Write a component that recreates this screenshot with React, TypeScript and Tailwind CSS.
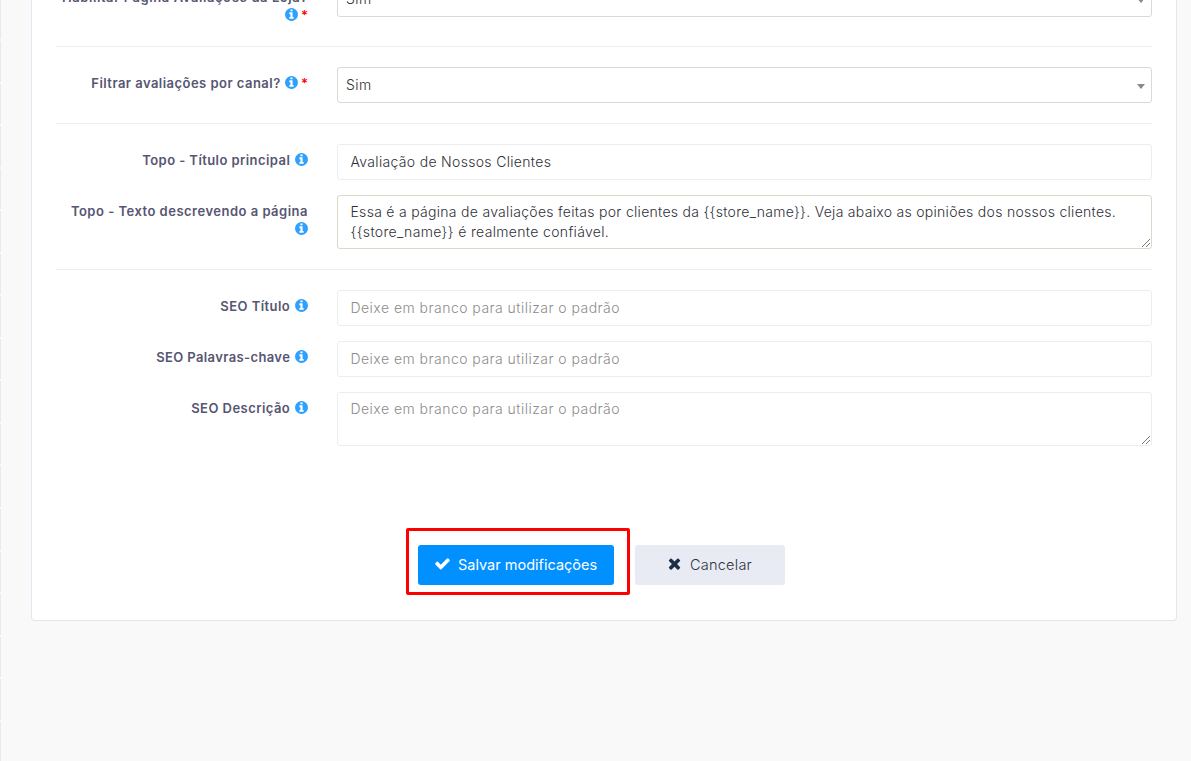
import type { ReactNode } from 'react';
import { clsx } from 'clsx';

const ICON_PATHS = {
  info: 'M1152 1376v-160q0-14-9-23t-23-9h-96v-512q0-14-9-23t-23-9h-320q-14 0-23 9t-9 23v160q0 14 9 23t23 9h96v320h-96q-14 0-23 9t-9 23v160q0 14 9 23t23 9h448q14 0 23-9t9-23zm-128-896v-160q0-14-9-23t-23-9h-192q-14 0-23 9t-9 23v160q0 14 9 23t23 9h192q14 0 23-9t9-23zm640 416q0 209-103 385.5t-279.5 279.5-385.5 103-385.5-103-279.5-279.5-103-385.5 103-385.5 279.5-279.5 385.5-103 385.5 103 279.5 279.5 103 385.5z',
  check:
    'M1671 566q0 40-28 68l-724 724-136 136q-28 28-68 28t-68-28l-136-136-362-362q-28-28-28-68t28-68l136-136q28-28 68-28t68 28l294 295 656-657q28-28 68-28t68 28l136 136q28 28 28 68z',
  times:
    'M1490 1322q0 40-28 68l-136 136q-28 28-68 28t-68-28l-294-294-294 294q-28 28-68 28t-68-28l-136-136q-28-28-28-68t28-68l294-294-294-294q-28-28-28-68t28-68l136-136q28-28 68-28t68 28l294 294 294-294q28-28 68-28t68 28l136 136q28 28 28 68t-28 68l-294 294 294 294q28 28 28 68z',
};

const SEO_PLACEHOLDER = 'Deixe em branco para utilizar o padrão';

function Icon({ name, className }: { name: keyof typeof ICON_PATHS; className?: string }) {
  return (
    <svg viewBox="0 0 1792 1792" fill="currentColor" className={className} aria-hidden="true">
      <path d={ICON_PATHS[name]} />
    </svg>
  );
}

interface FieldRowProps {
  label: string;
  labelClassName?: string;
  required?: boolean;
  children: ReactNode;
}

function FieldRow({ label, labelClassName = 'tracking-[0.45px]', required, children }: FieldRowProps) {
  return (
    <div className="flex">
      <label className="mr-[29px] w-[252px] shrink-0 pt-[7px] text-right text-[13px] leading-[18px] font-semibold text-[#575672]">
        <span className={clsx('whitespace-nowrap', labelClassName)}>{label}</span>{' '}
        <span className="inline-flex items-start pt-px align-top leading-[17px]">
          <Icon name="info" className={clsx('size-[15px] text-[#2ea1ff]', !required && '-mr-[0.5px]')} />
          {required && <span className="ml-0.5 text-[#ff0000]">*</span>}
        </span>
      </label>
      <div className="w-[815px]">{children}</div>
    </div>
  );
}

function SelectBox({ value }: { value: string }) {
  return (
    <div className="flex h-9 items-center justify-between rounded-[3px] border border-[#d9d9dc] pr-1.5 pl-2 text-sm font-light text-[#333]">
      <span className="tracking-[0.4px]">{value}</span>
      <span className="mt-0.5 border-x-4 border-t-5 border-x-transparent border-t-[#888]" />
    </div>
  );
}

function TextInput({ value, placeholder, className }: { value?: string; placeholder?: string; className?: string }) {
  return (
    <input
      defaultValue={value}
      placeholder={placeholder}
      className={clsx(
        'block h-9 w-full rounded-[3px] border border-[#ebedf2] px-[12.5px] pb-0.5 text-sm font-light text-[#2f3037] placeholder:text-[#8c8c8c]',
        className
      )}
    />
  );
}

function TextArea({ children, className }: { children: ReactNode; className?: string }) {
  return (
    <div
      className={clsx(
        'relative h-[54px] rounded-[3px] border px-[12.5px] pt-[6px] text-sm leading-5 font-light whitespace-nowrap',
        className
      )}
    >
      {children}
      {/* resize grip */}
      <svg viewBox="0 0 8 8" className="absolute right-px bottom-px size-2" stroke="#555" strokeWidth="0.8">
        <path d="M0 8L8 0M4 8L8 4" />
      </svg>
    </div>
  );
}

function Divider() {
  return <hr className="my-5 border-t border-[#ebedef]" />;
}

function SidebarEdge() {
  return (
    <div className="-mt-[1.6px] flex w-px shrink-0 flex-col gap-0.5">
      {Array.from({ length: 18 }, (_, i) => (
        <div key={i} className="h-[40.56px] shrink-0 bg-[#e8e8f0]" />
      ))}
    </div>
  );
}

export default function App() {
  return (
    <div className="flex h-[761px] overflow-hidden bg-[#f9f9f9] font-['Inter','Noto_Sans',sans-serif]">
      <SidebarEdge />
      <main className="ml-[30px] h-[621px] w-[1146px] shrink-0 rounded-b border border-t-0 border-[#e4e5ee] bg-white px-6">
        <div className="-mt-[19px]">
          <FieldRow label="Habilitar Página Avaliações da Loja?" labelClassName="tracking-[0.57px]" required>
            <SelectBox value="Sim" />
          </FieldRow>
          <hr className="mt-[22px] mb-5 border-t border-[#ebedef]" />
          <FieldRow label="Filtrar avaliações por canal?" labelClassName="tracking-[0.47px]" required>
            <SelectBox value="Sim" />
          </FieldRow>
          <Divider />
          <div className="flex flex-col gap-[15px]">
            <FieldRow label="Topo - Título principal" labelClassName="tracking-[0.43px]">
              <TextInput value="Avaliação de Nossos Clientes" className="tracking-[0.32px]" />
            </FieldRow>
            <FieldRow label="Topo - Texto descrevendo a página" labelClassName="tracking-[0.49px]">
              <TextArea className="border-[#d9d9cc] text-[#2f3037]">
                <p className="tracking-[0.29px]">
                  {'Essa é a página de avaliações feitas por clientes da {{store_name}}. Veja abaixo as opiniões dos nossos clientes.'}
                </p>
                <p className="tracking-[0.34px]">{'{{store_name}} é realmente confiável.'}</p>
              </TextArea>
            </FieldRow>
          </div>
          <Divider />
          <div className="flex flex-col gap-[15px]">
            <FieldRow label="SEO Título">
              <TextInput placeholder={SEO_PLACEHOLDER} className="tracking-[0.47px]" />
            </FieldRow>
            <FieldRow label="SEO Palavras-chave" labelClassName="tracking-[0.38px]">
              <TextInput placeholder={SEO_PLACEHOLDER} className="tracking-[0.47px]" />
            </FieldRow>
            <FieldRow label="SEO Descrição">
              <TextArea className="border-[#ebedf2] tracking-[0.47px] text-[#8c8c8c]">{SEO_PLACEHOLDER}</TextArea>
            </FieldRow>
          </div>
        </div>

        <div className="mt-[82px] ml-[350px] flex items-center gap-[5px] text-[14.5px]">
          <div className="rounded-xs border-3 border-[#ff0000] pt-3.5 pr-[13px] pb-[7px] pl-[9px]">
            <button className="flex h-10 w-[196px] items-center rounded-[3px] bg-[#0090ff] pl-4 text-white">
              <Icon name="check" className="mr-[7px] mb-[3px] size-[17px]" />
              <span>Salvar modificações</span>
            </button>
          </div>
          <button className="mt-[7px] flex h-10 w-[150px] items-center rounded-[3px] bg-[#e8ebf4] pl-[31px] font-light text-[#2e343f]">
            <Icon name="times" className="mr-[7px] mb-[3px] size-[17px] text-[#1d2f45]" />
            <span className="tracking-[0.24px]">Cancelar</span>
          </button>
        </div>
      </main>
    </div>
  );
}
